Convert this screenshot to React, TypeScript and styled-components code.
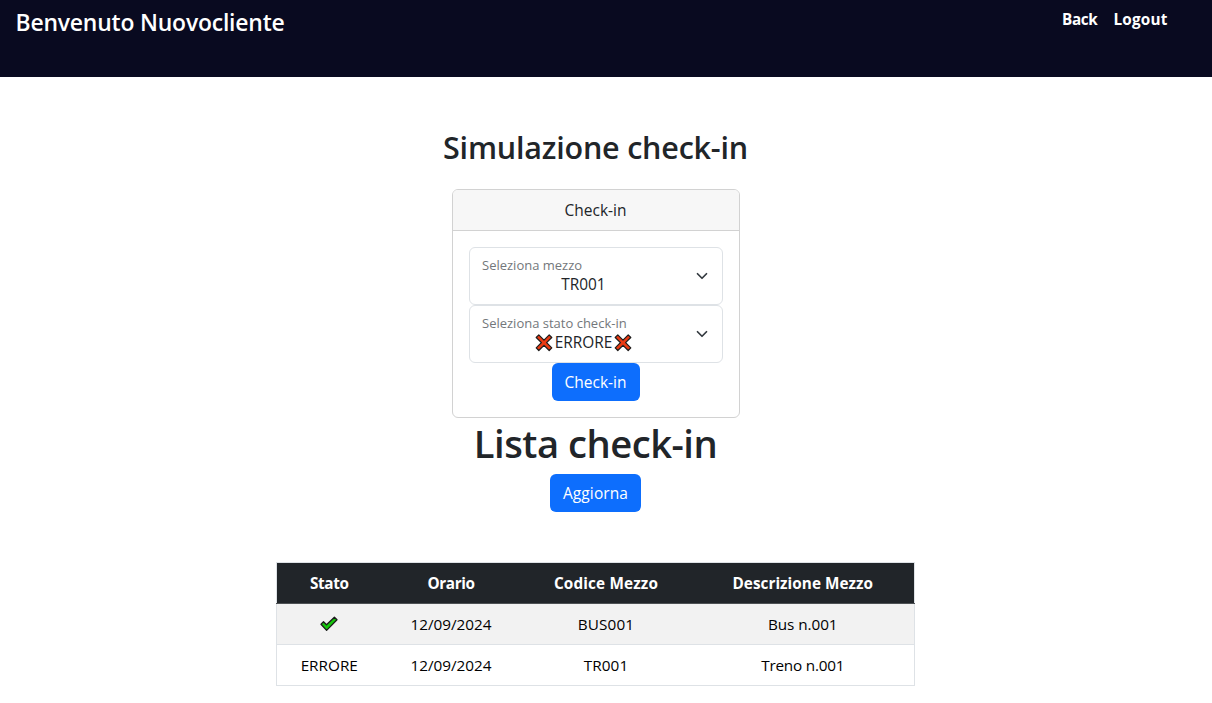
import React from 'react';
import styled, { createGlobalStyle } from 'styled-components';

const GlobalStyle = createGlobalStyle`
  *, *::before, *::after { box-sizing: border-box; }
  body {
    margin: 0;
    background: #fff;
    color: #212529;
    font-family: "Open Sans", "Noto Sans", sans-serif;
    font-size: 15.3px;
    line-height: 24px;
  }
`;

const Text = styled.span<{ $spacing?: number }>`
  letter-spacing: ${(p) => p.$spacing ?? 0}px;
`;

const Page = styled.div`
  display: flex;
  flex-direction: column;
  min-height: 703px;
`;

const Header = styled.header`
  display: flex;
  justify-content: space-between;
  height: 77px;
  padding: 8px 44.5px 0 15.5px;
  background: #090a20;
  color: #fff;
`;

const Welcome = styled.h4`
  margin: 0;
  font-size: 22.9px;
  font-weight: 600;
  line-height: 29px;
  letter-spacing: -0.18px;
`;

const Nav = styled.nav`
  display: flex;
  gap: 16px;
  line-height: 22px;
`;

const NavLink = styled.a<{ $spacing: number }>`
  color: #fff;
  font-weight: 700;
  letter-spacing: ${(p) => p.$spacing}px;
  text-decoration: none;
`;

const Main = styled.main`
  display: flex;
  flex-direction: column;
  align-items: center;
  padding: 51px 21px 0 0;
`;

const Title = styled.h2`
  margin: 0 0 23px;
  font-size: 30.5px;
  font-weight: 600;
  line-height: 38px;
  letter-spacing: -0.2px;
`;

const Card = styled.section`
  width: 288px;
  border: 1px solid #d2d2d2;
  border-radius: 6px;
`;

const CardHeader = styled.div`
  padding: 8px 16px;
  border-bottom: 1px solid #d2d2d2;
  border-radius: 5px 5px 0 0;
  background: #f7f7f7;
  font-size: 15.5px;
  text-align: center;
`;

const CardBody = styled.div`
  display: flex;
  flex-direction: column;
  align-items: center;
  padding: 16px;
`;

const Select = styled.div`
  display: flex;
  align-items: center;
  width: 100%;
  height: 58px;
  padding: 0 14px 0 12.5px;
  border: 1px solid #dee2e6;
  border-radius: 6px;
`;

const SelectContent = styled.div`
  display: flex;
  flex: 1;
  flex-direction: column;
  margin-right: 12px;
  padding-bottom: 2px;
`;

const SelectLabel = styled.label`
  color: #73777b;
  font-size: 13px;
  line-height: 19px;
`;

const SelectValue = styled.div`
  display: flex;
  align-items: center;
  justify-content: center;
  gap: 1.75px;
  height: 20px;
  padding-left: 1.5px;
  font-size: 15.4px;
  line-height: 20px;
`;

const Button = styled.button<{ $width: number }>`
  width: ${(p) => p.$width}px;
  height: 38px;
  padding: 0;
  border: 0;
  border-radius: 6px;
  background: #0d6efd;
  color: #fff;
  font: 400 15.5px/24px "Open Sans", "Noto Sans", sans-serif;
`;

const ListTitle = styled.h1`
  margin: 0;
  padding: 1px 0 7px;
  font-size: 38.2px;
  font-weight: 600;
  line-height: 48px;
  letter-spacing: -0.5px;
`;

const Table = styled.table`
  width: 638px;
  margin: 50px 1px 0 0;
  border: 1px solid #dee2e6;
  border-collapse: collapse;
  table-layout: fixed;
  text-align: center;
`;

const HeadCell = styled.th<{ $width: number }>`
  width: ${(p) => p.$width}px;
  height: 41px;
  padding: 0;
  border-bottom: 1px solid #4d5154;
  background: #212529;
  color: #fff;
  font-weight: 700;
`;

const Row = styled.tr<{ $striped?: boolean }>`
  background: ${(p) => (p.$striped ? '#f2f2f2' : '#fff')};
  color: #000;
`;

const Cell = styled.td`
  height: 41px;
  padding: 0;
  border-bottom: 1px solid #dee2e6;
`;

const Glyph = styled.svg`
  display: inline-block;
  flex: none;
  vertical-align: middle;
`;

const CheckGlyph = styled(Glyph)`
  margin-bottom: 3px;
`;

const Chevron = () => (
  <Glyph width="12" height="12" viewBox="0 0 16 16" fill="none">
    <path d="m2 5 6 6 6-6" stroke="#343a40" strokeWidth="2.3" strokeLinecap="round" strokeLinejoin="round" />
  </Glyph>
);

const Cross = () => (
  <Glyph width="18" height="18" viewBox="0 0 18 18">
    <path
      d="M3.8 .9 9 6.1 14.2 .9 16.8 3.5 11.6 8.7 16.8 13.9 14.2 16.5 9 11.3 3.8 16.5 1.2 13.9 6.4 8.7 1.2 3.5Z"
      fill="#ea3a12"
      stroke="#1c1c1c"
      strokeWidth="1.2"
      strokeLinejoin="round"
    />
  </Glyph>
);

const Check = () => (
  <CheckGlyph width="18" height="16" viewBox="0 0 18 16">
    <path
      d="M1 8.2 3.5 5.8 6.5 8.8 14.4 1.2 17 3.8 6.6 14.4Z"
      fill="#16c60c"
      stroke="#1c1c1c"
      strokeWidth="1.3"
      strokeLinejoin="round"
    />
  </CheckGlyph>
);

const columns = [
  { label: 'Stato', width: 106, spacing: -0.35 },
  { label: 'Orario', width: 138, spacing: -0.4 },
  { label: 'Codice Mezzo', width: 172, spacing: 0.15 },
  { label: 'Descrizione Mezzo', width: 222, spacing: 0.03 },
];

export default function App() {
  return (
    <Page>
      <GlobalStyle />
      <Header>
        <Welcome>Benvenuto Nuovocliente</Welcome>
        <Nav>
          <NavLink $spacing={-0.4}>Back</NavLink>
          <NavLink $spacing={0.2}>Logout</NavLink>
        </Nav>
      </Header>
      <Main>
        <Title>Simulazione check-in</Title>
        <Card>
          <CardHeader>Check-in</CardHeader>
          <CardBody>
            <Select>
              <SelectContent>
                <SelectLabel>Seleziona mezzo</SelectLabel>
                <SelectValue><Text>TR001</Text></SelectValue>
              </SelectContent>
              <Chevron />
            </Select>
            <Select>
              <SelectContent>
                <SelectLabel>Seleziona stato check-in</SelectLabel>
                <SelectValue><Cross /><Text>ERRORE</Text><Cross /></SelectValue>
              </SelectContent>
              <Chevron />
            </Select>
            <Button $width={88}>Check-in</Button>
          </CardBody>
        </Card>
        <ListTitle>Lista check-in</ListTitle>
        <Button $width={91}><Text $spacing={0.1}>Aggiorna</Text></Button>
        <Table>
          <thead>
            <tr>
              {columns.map((c) => (
                <HeadCell key={c.label} $width={c.width}><Text $spacing={c.spacing}>{c.label}</Text></HeadCell>
              ))}
            </tr>
          </thead>
          <tbody>
            <Row $striped>
              <Cell><Check /></Cell>
              <Cell>12/09/2024</Cell>
              <Cell><Text $spacing={0.1}>BUS001</Text></Cell>
              <Cell><Text $spacing={-0.08}>Bus n.001</Text></Cell>
            </Row>
            <Row>
              <Cell>ERRORE</Cell>
              <Cell>12/09/2024</Cell>
              <Cell><Text $spacing={0.1}>TR001</Text></Cell>
              <Cell><Text $spacing={-0.22}>Treno n.001</Text></Cell>
            </Row>
          </tbody>
        </Table>
      </Main>
    </Page>
  );
}
